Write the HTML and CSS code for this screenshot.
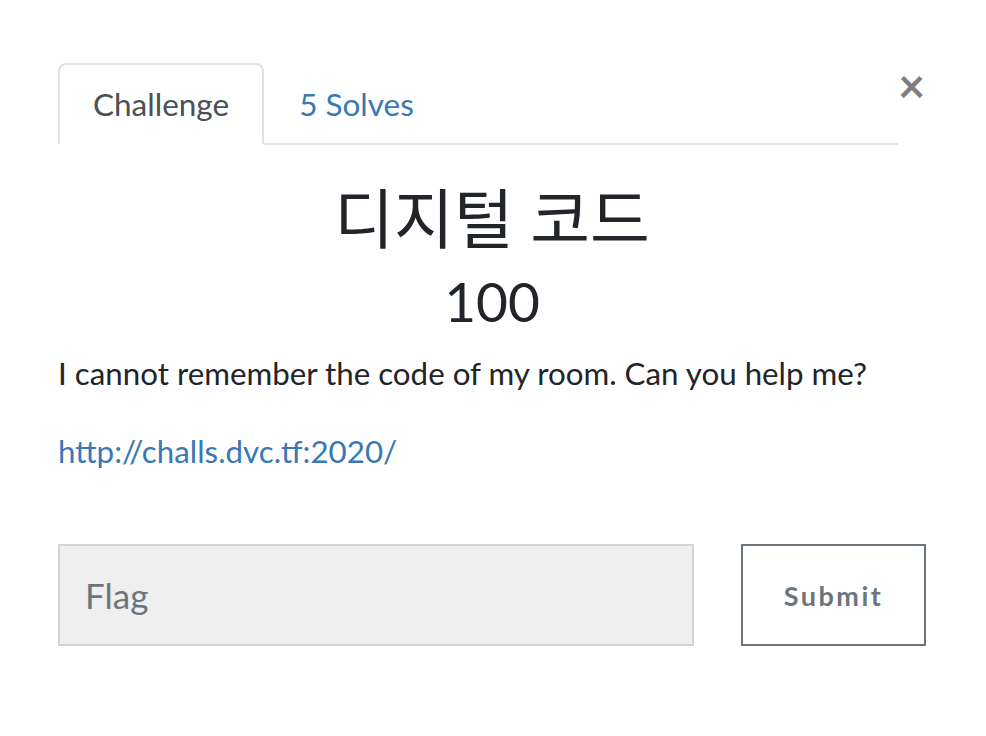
FILE: index.html
```html
<!DOCTYPE html>
<html lang="ko">
<head>
<meta charset="utf-8">
<title>Challenge</title>
<link rel="stylesheet" href="styles.css">
</head>
<body>
<div class="modal">
  <div class="head">
    <nav class="tabs">
      <a class="tab active">Challenge</a>
      <a class="tab">5 Solves</a>
    </nav>
    <button class="close" aria-label="Close">&times;</button>
  </div>
  <h2 class="name">디지털 코드</h2>
  <h3 class="value">100</h3>
  <p class="desc">I cannot remember the code of my room. Can you help me?</p>
  <p class="desc"><a class="link" href="#">http://challs.dvc.tf:2020/</a></p>
  <form class="flag-form">
    <input class="flag-input" type="text" placeholder="Flag">
    <button class="submit" type="button">Submit</button>
  </form>
</div>
</body>
</html>
```
FILE: styles.css
```css
html, body {
  margin: 0;
  background: #fff;
}
body {
  font-family: "Lato", "Noto Sans CJK KR", sans-serif;
  color: #212529;
}
.modal {
  width: 868px;
  padding: 63px 0 0 58px;
}
.head {
  display: flex;
  align-items: flex-start;
}
.tabs {
  flex: 1;
  display: flex;
  border-bottom: 2px solid #dee2e6;
}
.tab {
  display: block;
  font-size: 31.5px;
  line-height: 48px;
  padding: 15px 33px;
  margin-bottom: -2px;
  color: #3a78b5;
  border: 2px solid transparent;
  border-radius: 8px 8px 0 0;
}
.tab.active {
  color: #495057;
  border-color: #dee2e6 #dee2e6 #fff;
  background: #fff;
}
.close {
  width: 28px;
  margin-top: -1px;
  padding: 0 1px 0 0;
  border: 0;
  background: none;
  font-family: "Lato", sans-serif;
  font-size: 47px;
  font-weight: 700;
  line-height: 1;
  color: #000;
  opacity: .5;
  text-align: right;
}
.name {
  margin: 34px 0 0;
  text-align: center;
  font-family: "Lato", "Noto Sans CJK KR", sans-serif;
  font-weight: 400;
  font-size: 65px;
  line-height: 1.2;
}
.value {
  margin: 11px 0 0;
  text-align: center;
  font-weight: 400;
  font-size: 55px;
  line-height: 1.2;
}
.desc {
  margin: 16px 0 0;
  font-size: 31.3px;
  line-height: 47px;
}
.desc + .desc {
  margin-top: 31px;
}
.link {
  color: #3a78b5;
  text-decoration: none;
}
.flag-form {
  display: flex;
  margin-top: 69px;
  gap: 47px;
}
.flag-input {
  flex: 0 0 636px;
  box-sizing: border-box;
  height: 102px;
  padding: 0 25px;
  background: #efefef;
  border: 2px solid #d4d4d4;
  font-family: "Lato", sans-serif;
  font-size: 35px;
  color: #495057;
  outline: none;
}
.flag-input::placeholder {
  color: #6c757d;
}
.submit {
  flex: 1;
  box-sizing: border-box;
  height: 102px;
  background: #fff;
  border: 2px solid #6c757d;
  font-family: "Lato", sans-serif;
  font-weight: 700;
  font-size: 27px;
  letter-spacing: 2.5px;
  color: #6c757d;
}
```
